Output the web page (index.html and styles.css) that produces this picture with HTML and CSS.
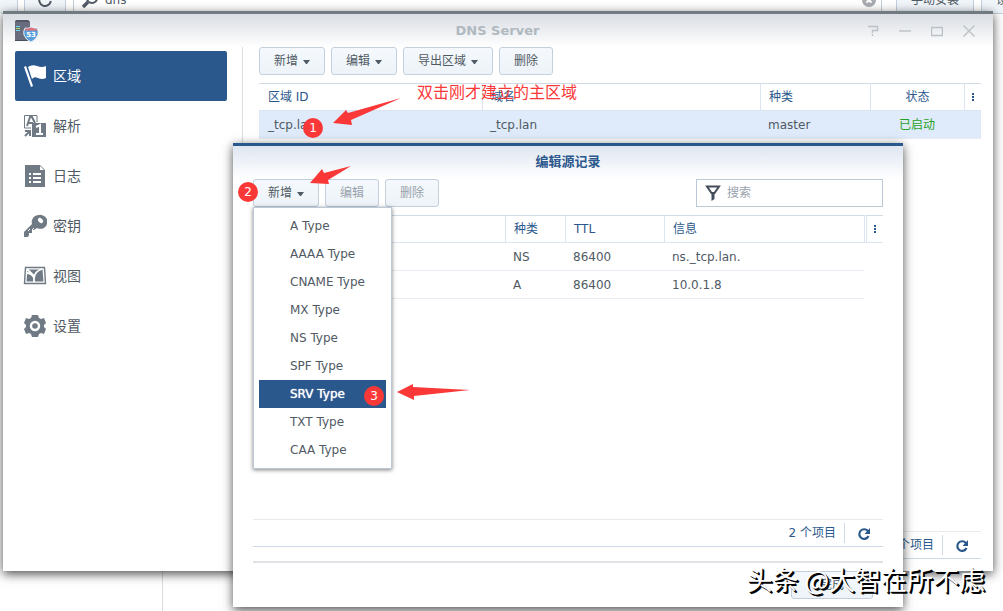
FILE: index.html
```html
<!DOCTYPE html>
<html lang="zh-CN">
<head>
  <meta charset="UTF-8">
  <title>DNS Server</title>
  <link rel="stylesheet" href="styles.css">
</head>
<body>
  <div class="desktop">

    <!-- package center behind the DNS window -->
    <div class="backdrop">
      <div class="backdrop-bar">
        <button class="btn back" aria-label="前进"></button>
        <button class="btn reload" aria-label="刷新">
          <svg width="16" height="16" viewBox="0 0 16 16"><path d="M12.5 4.5A5.8 5.8 0 1 0 13.8 9" fill="none" stroke="#505a64" stroke-width="2"/></svg>
        </button>
        <label class="back-search">
          <svg width="18" height="18" viewBox="0 0 18 18"><circle cx="11" cy="7" r="5" fill="none" stroke="#505a64" stroke-width="2"/><path d="M7 11L2 16" stroke="#505a64" stroke-width="3.4"/></svg>
          <input type="text" value="dns" aria-label="搜索套件">
          <svg width="14" height="14" viewBox="0 0 14 14"><circle cx="7" cy="7" r="7" fill="#a9adb2"/><path d="M4.500 4.500l5 5M9.500 4.500l-5 5" stroke="#fff" stroke-width="2"/></svg>
        </label>
        <button class="btn manual">手动安装</button>
        <button class="btn setup">设置</button>
      </div>
      <div class="backdrop-side"></div>
    </div>

    <div class="window main-window">
      <div class="titlebar">
        <svg class="app-icon" width="24" height="24" viewBox="0 0 24 24">
          <path d="M2 1h12l2 2v18H1V3z" fill="#686c7c"/>
          <path d="M2 1h12l2 2H1z" fill="#525665"/>
          <path d="M1 21h15v1H1z" fill="#4b4e5b"/>
          <path d="M2 7.500h4" stroke="#6fd3f5"/>
          <path d="M2 9.500h4" stroke="#9be04f"/>
          <path d="M2 11.500h4" stroke="#6fd3f5"/>
          <path d="M11 9q3 1 6-1 3 2 6 1 2 3 1 7-2 5-7 7-5-2-7-7-1-4 1-7z" fill="#5a9fdc" stroke="#e9eef4"/>
          <path d="M11.500 9.500q3 .5 5.500-1 3 1.500 5.500 1l.8 2H10.800z" fill="#e07078"/>
          <text x="17" y="18" class="shield-text">53</text>
        </svg>
        <h1>DNS Server</h1>
        <div class="win-controls">
          <button aria-label="帮助"><svg width="12" height="12" viewBox="0 0 12 12"><path d="M1 1.500h9.500v4H5.500V8M5.500 9v2"/></svg></button>
          <button aria-label="最小化"><svg width="12" height="12" viewBox="0 0 12 12"><path d="M0 6h12"/></svg></button>
          <button aria-label="最大化"><svg width="12" height="12" viewBox="0 0 12 12"><path d="M.5 2.500h11v8H.5zM0 2.500h12"/></svg></button>
          <button aria-label="关闭"><svg width="12" height="12" viewBox="0 0 12 12"><path d="M.5 .5l11 11M11.500 .5l-11 11"/></svg></button>
        </div>
      </div>

      <div class="window-body">
        <nav class="sidebar">
          <a href="#" class="active">
            <svg width="24" height="24" viewBox="0 0 24 24"><path d="M1 3l2-1 7 20-2 1z" fill="#fff"/><path d="M5 3q4-3 9-1t9 0v12q-4 2-8 0t-6 1z" fill="#fff"/></svg>
            区域
          </a>
          <a href="#">
            <svg width="24" height="24" viewBox="0 0 24 24"><path d="M14 8V1.500H1.500V14H8" fill="none" stroke="#707a84"/><path d="M4 12L7 3h2l3 6M5 9h5" fill="none" stroke="#707a84" stroke-width="2"/><rect x="9" y="9" width="14" height="14" fill="#707a84"/><path d="M13 13l4-2v9M13 20h7" fill="none" stroke="#fff" stroke-width="2"/><path d="M2 17h5v5M7 17l-5 5" fill="none" stroke="#707a84" stroke-width="2"/></svg>
            解析
          </a>
          <a href="#">
            <svg width="24" height="24" viewBox="0 0 24 24"><path d="M2 1h15l5 5v17H2z" fill="#707a84"/><path d="M17 2v4h4z" fill="#fff"/><path d="M6 10h2M10 10h8M6 14h2M10 14h8M6 18h2M10 18h8" stroke="#fff" stroke-width="2"/></svg>
            日志
          </a>
          <a href="#">
            <svg width="24" height="24" viewBox="0 0 24 24"><path d="M16 1a7 7 0 0 0-7 9L1 18v5h4l1-2v-2h3v-3h2l3-2a7 7 0 1 0 2-13z" fill="#707a84"/><path d="M5 17l2-2M9 16l2-2" stroke="#fff"/><ellipse cx="17.500" cy="6.500" rx="3" ry="2" transform="rotate(45 17.500 6.500)" fill="#fff"/></svg>
            密钥
          </a>
          <a href="#">
            <svg width="24" height="24" viewBox="0 0 24 24"><path d="M2.500 3.500h19l1 16h-21z" fill="#fff" stroke="#707a84" stroke-width="1.400"/><path d="M4.500 5.500h15l1 12h-17z" fill="#707a84"/><path d="M3 9q6 0 8 5v4M11 14q1-7 8-9M4 5l7 7" fill="none" stroke="#fff" stroke-width="1.800"/></svg>
            视图
          </a>
          <a href="#">
            <svg width="24" height="24" viewBox="0 0 24 24"><path d="M9 1h6l1 3 2 1 3-1 2 5-2 2v2l2 2-2 5-3-1-2 1-1 3H9l-1-3-2-1-3 1-2-5 2-2v-2L1 9l2-5 3 1 2-1z" fill="#707a84"/><circle cx="12" cy="12" r="4" fill="none" stroke="#fff" stroke-width="2.400"/></svg>
            设置
          </a>
        </nav>

        <section class="content">
          <div class="toolbar">
            <button class="btn">新增<i class="caret"></i></button>
            <button class="btn">编辑<i class="caret"></i></button>
            <button class="btn">导出区域<i class="caret"></i></button>
            <button class="btn">删除</button>
          </div>
          <table class="grid zones">
            <colgroup><col class="c-id"><col><col class="c-kind"><col class="c-status"><col class="c-more"></colgroup>
            <thead>
              <tr><th>区域 ID</th><th>域名</th><th>种类</th><th class="center">状态</th><th class="more"><i class="dots"></i></th></tr>
            </thead>
            <tbody>
              <tr class="selected"><td>_tcp.lan</td><td>_tcp.lan</td><td>master</td><td class="center ok">已启动</td><td></td></tr>
            </tbody>
          </table>
          <div class="pager">
            <span>1 个项目</span>
            <button aria-label="刷新"><svg width="14" height="14" viewBox="0 0 14 14"><path d="M10.800 4A4.800 4.800 0 1 0 11.500 9" fill="none" stroke="#2b588c" stroke-width="2.200"/><path d="M13 1v6H7.500z" fill="#2b588c"/></svg></button>
          </div>
        </section>
      </div>
    </div>

    <div class="window dialog">
      <h2>编辑源记录</h2>
      <div class="toolbar">
        <div class="dropdown">
          <button class="btn">新增<i class="caret"></i></button>
          <ul class="menu">
            <li><button>A Type</button></li>
            <li><button>AAAA Type</button></li>
            <li><button>CNAME Type</button></li>
            <li><button>MX Type</button></li>
            <li><button>NS Type</button></li>
            <li><button>SPF Type</button></li>
            <li><button class="current">SRV Type</button></li>
            <li><button>TXT Type</button></li>
            <li><button>CAA Type</button></li>
          </ul>
        </div>
        <button class="btn" disabled>编辑</button>
        <button class="btn" disabled>删除</button>
        <label class="search">
          <svg width="16" height="16" viewBox="0 0 16 16"><path d="M2 1.500h12L9.500 8H6.500z" fill="none" stroke="#444e5a" stroke-width="2"/><path d="M6.500 7h3v7l-3 2z" fill="#444e5a"/></svg>
          <input type="text" placeholder="搜索" aria-label="搜索">
        </label>
      </div>
      <table class="grid records">
        <colgroup><col><col class="c-type"><col class="c-ttl"><col class="c-info"><col class="c-end"></colgroup>
        <thead>
          <tr><th></th><th>种类</th><th>TTL</th><th>信息</th><th class="more"><i class="dots"></i></th></tr>
        </thead>
        <tbody>
          <tr><td></td><td>NS</td><td>86400</td><td>ns._tcp.lan.</td><td></td></tr>
          <tr><td></td><td>A</td><td>86400</td><td>10.0.1.8</td><td></td></tr>
        </tbody>
      </table>
      <div class="pager">
        <span>2 个项目</span>
        <button aria-label="刷新"><svg width="14" height="14" viewBox="0 0 14 14"><path d="M10.800 4A4.800 4.800 0 1 0 11.500 9" fill="none" stroke="#2b588c" stroke-width="2.200"/><path d="M13 1v6H7.500z" fill="#2b588c"/></svg></button>
      </div>
      <div class="dialog-footer">
        <button class="btn">完成</button>
      </div>
    </div>

    <!-- tutorial marks -->
    <div class="marks">
      <svg class="arrows" width="500" height="420" viewBox="0 0 500 420">
        <path d="M333 123L346 110l2 3 53-15-50 22 1 5z"/>
        <path d="M310 183l12-14 2 4 27-7-23 14 1 4z"/>
        <path d="M397 392l16-8v3l57 3-56 6v4z"/>
      </svg>
      <p class="note">双击刚才建立的主区域</p>
      <span class="badge step1">1</span>
      <span class="badge step2">2</span>
      <span class="badge step3">3</span>
      <p class="watermark">头条 @大智在所不虑</p>
    </div>
  </div>
</body>
</html>
```
FILE: styles.css
```css
* {
  box-sizing: border-box;
}
body {
  margin: 0;
  font-family: "DejaVu Sans", "Noto Sans CJK SC", sans-serif;
  font-size: 12px;
  line-height: 18px;
  color: #505a64;
}
button, input {
  font: inherit;
  color: inherit;
}
h1, h2, p, ul {
  margin: 0;
  padding: 0;
}
svg {
  flex: none;
}
.desktop {
  position: relative;
  height: 100vh;
  overflow: hidden;
  background: #fff;
}

/* shared controls */
.btn {
  display: flex;
  align-items: center;
  justify-content: center;
  gap: 5px;
  height: 28px;
  padding: 0 14px;
  border: 1px solid #c3cfdc;
  border-radius: 3px;
  background: linear-gradient(#f5f9fd, #edf3f8);
  white-space: nowrap;
}
.btn:disabled {
  color: #9aa3ad;
}
.caret {
  width: 7px;
  margin-top: 2px;
  border: solid transparent;
  border-width: 4px 3px 0;
  border-top-color: #505a64;
}
.toolbar {
  display: flex;
  gap: 6px;
  margin-bottom: 8px;
}

/* package center */
.backdrop {
  display: flex;
  flex-direction: column;
  height: 100%;
}
.backdrop-bar {
  display: flex;
  gap: 7px;
  margin-top: -14px;
}
.backdrop-bar .btn {
  flex: none;
  padding: 0;
}
.backdrop-bar .back {
  width: 18px;
  margin-right: -1px;
  border-left: 0;
}
.backdrop-bar .reload {
  width: 42px;
}
.back-search {
  flex: 1;
  display: flex;
  align-items: center;
  gap: 6px;
  height: 28px;
  padding: 0 5px 0 7px;
  margin-right: 7px;
  border: 1px solid #c3cfdc;
}
.back-search input {
  flex: 1;
  min-width: 0;
  padding: 0;
  border: 0;
}
.backdrop-bar .manual {
  width: 78px;
}
.backdrop-bar .setup {
  width: 22px;
  padding-left: 14px;
  justify-content: flex-start;
  border-right: 0;
  border-radius: 3px 0 0 3px;
  overflow: hidden;
}
.backdrop-side {
  flex: 1;
  width: 163px;
  border-right: 1px solid #dcdcdc;
}

/* windows */
.window {
  position: absolute;
  display: flex;
  flex-direction: column;
  background: #fff;
  box-shadow: 0 3px 10px rgba(0, 0, 0, 0.7);
}
.main-window {
  top: 11px;
  right: 10px;
  bottom: 40px;
  left: 3px;
  border-top: 3px solid #707a80;
}
.titlebar {
  display: flex;
  align-items: center;
  height: 33px;
  padding: 0 18px 0 11px;
  background: linear-gradient(#d9dde3, #fff);
}
.titlebar h1 {
  flex: 1;
  padding-left: 90px;
  font-size: 13px;
  line-height: 18px;
  text-align: center;
  color: #b0b8c0;
}
.shield-text {
  font-size: 7px;
  font-weight: bold;
  text-anchor: middle;
  fill: #fff;
}
.win-controls {
  display: flex;
  gap: 20px;
}
.win-controls button {
  display: flex;
  padding: 0;
  border: 0;
  background: none;
}
.win-controls path {
  fill: none;
  stroke: #bcc1c6;
  stroke-width: 1.4;
}
.window-body {
  flex: 1;
  display: flex;
}
.sidebar {
  width: 240px;
  padding: 4px 15px 0 12px;
  border-right: 1px solid #dcdfe2;
}
.sidebar a {
  display: flex;
  align-items: center;
  gap: 6px;
  height: 50px;
  padding-left: 8px;
  border-radius: 2px;
  font-size: 14px;
  color: #505a64;
  text-decoration: none;
}
.sidebar .active {
  background: #2b588c;
  color: #fff;
}
.content {
  flex: 1;
  display: flex;
  flex-direction: column;
  padding: 0 12px 12px 16px;
}

/* data grids */
.grid {
  width: 100%;
  table-layout: fixed;
  border-spacing: 0;
}
.grid th, .grid td {
  height: 28px;
  padding: 0 8px;
  text-align: left;
  white-space: nowrap;
}
.grid th {
  border: solid #dbe5f1;
  border-width: 1px 0 1px 1px;
  border-top-color: #d0dbe6;
  font-weight: normal;
  color: #2b588c;
}
.grid th:first-child, .grid td:first-child {
  padding-left: 9px;
}
.grid th:first-child {
  border-left: 0;
}
.grid td {
  border-bottom: 1px solid #e6ecf2;
}
.grid .center {
  text-align: center;
}
.grid .more {
  padding: 0;
}
.grid .ok {
  color: #28a028;
}
.selected {
  background: #dfebfa;
}
.dots {
  display: block;
  width: 2px;
  height: 8px;
  margin: 0 auto;
  background: repeating-linear-gradient(#2b588c 0 2px, transparent 2px 3px);
}
.c-id { width: 223px; }
.c-kind { width: 110px; }
.c-status { width: 94px; }
.c-more { width: 17px; }
.c-type { width: 60px; }
.c-ttl { width: 99px; }
.c-info { width: 200px; }
.c-end { width: 19px; }
.records .more {
  border-left: 3px double #dbe5f1;
}
.records td:last-child {
  border-bottom: 0;
}
.pager {
  display: flex;
  align-items: center;
  justify-content: flex-end;
  gap: 8px;
  height: 28px;
  margin-top: auto;
  border: solid #e8ebee;
  border-width: 1px 0;
  border-bottom-color: #ced9e8;
  color: #2b588c;
}
.pager button {
  display: flex;
  justify-content: center;
  align-items: center;
  width: 39px;
  height: 20px;
  padding: 2px 0 0;
  border: 0;
  border-left: 1px solid #ced9e8;
  background: none;
}

/* record dialog */
.dialog {
  top: 143px;
  right: 100px;
  bottom: 4px;
  left: 233px;
  padding: 0 20px 8px;
  border-top: 3px solid #2b588c;
  background: linear-gradient(#dfe6f1, #fff 33px);
}
.dialog h2 {
  height: 33px;
  font-size: 13px;
  line-height: 32px;
  text-align: center;
  color: #2b588c;
}
.search {
  display: flex;
  align-items: center;
  gap: 6px;
  width: 187px;
  height: 28px;
  margin-left: auto;
  padding: 0 8px;
  border: 1px solid #b9c7d6;
  background: #fff;
}
.search input {
  flex: 1;
  min-width: 0;
  padding: 0;
  border: 0;
}
.search input::placeholder {
  color: #98a2ac;
}
.dropdown {
  position: relative;
}
.menu {
  position: absolute;
  top: 28px;
  left: 0;
  z-index: 1;
  width: 139px;
  padding: 4px 5px;
  border: 1px solid #bcc8d5;
  background: #fff;
  box-shadow: 0 1px 4px rgba(0, 0, 0, 0.5);
  list-style: none;
}
.menu button {
  display: block;
  width: 100%;
  height: 28px;
  padding: 0 0 0 31px;
  border: 0;
  background: none;
  text-align: left;
}
.menu .current {
  background: #2b588c;
  color: #fff;
  text-shadow: 0 0 1px #fff;
}
.dialog-footer {
  display: flex;
  justify-content: flex-end;
  margin-top: 14px;
  padding: 8px 10px 0;
  border-top: 2px solid #e0e2e5;
}
.dialog-footer .btn {
  width: 82px;
}

/* tutorial marks */
.marks {
  position: absolute;
  inset: 0;
  z-index: 2;
  pointer-events: none;
}
.arrows {
  position: absolute;
  top: 0;
  left: 0;
  fill: #fb3838;
}
.note {
  position: absolute;
  top: 81px;
  left: 417px;
  font-size: 16px;
  line-height: 24px;
  color: #fb3838;
}
.badge {
  position: absolute;
  width: 20px;
  border-radius: 50%;
  background: #fb3838;
  color: #fff;
  line-height: 20px;
  text-align: center;
}
.step1 { top: 118px; left: 303px; }
.step2 { top: 182px; left: 238px; }
.step3 { top: 386px; left: 364px; }
.watermark {
  position: absolute;
  right: 18px;
  bottom: 14px;
  font-family: "Noto Sans CJK SC", sans-serif;
  font-size: 26px;
  line-height: 36px;
  color: #fff;
  text-shadow: 1px 1px 0 #000, 2px 2px 0 #000;
}
```
